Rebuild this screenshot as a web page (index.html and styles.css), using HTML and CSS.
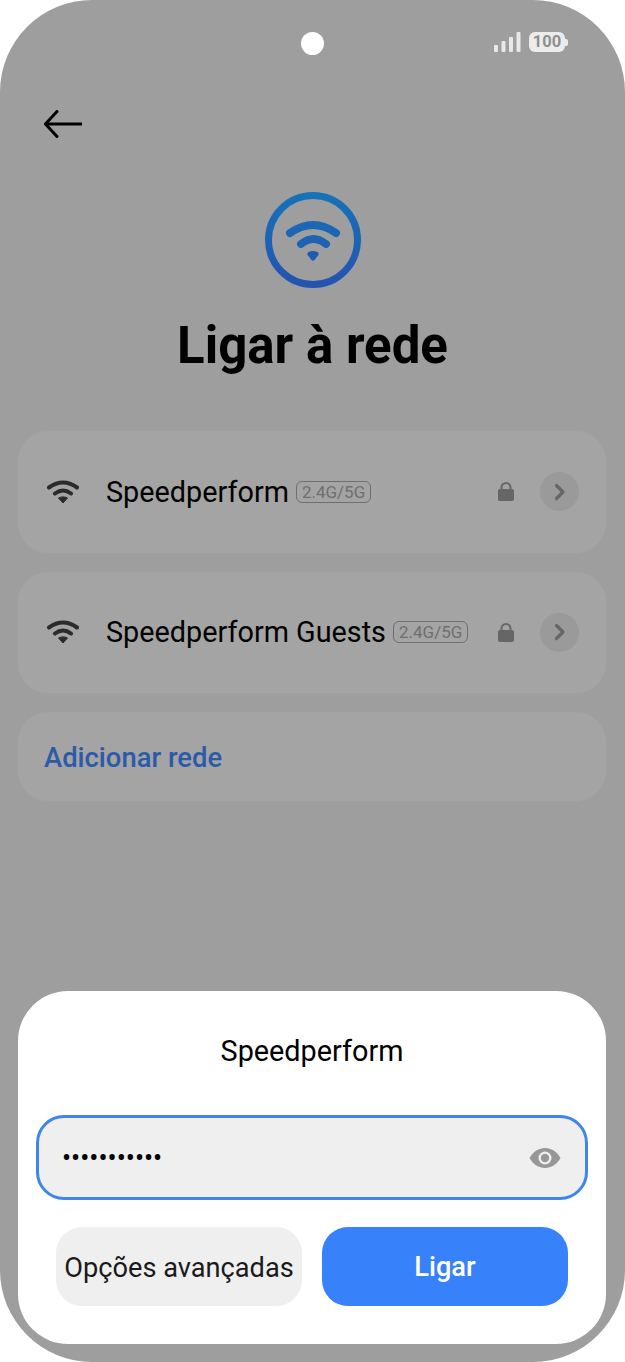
FILE: index.html
```html
<!DOCTYPE html>
<html lang="pt">
<head>
    <meta charset="UTF-8">
    <meta name="viewport" content="width=device-width, initial-scale=1.0">
    <title>Ligar à rede</title>
    <link rel="stylesheet" href="styles.css">
</head>
<body>
    <div class="phone">
        <!-- Status bar -->
        <div class="status-bar">
            <div class="camera"></div>
            <svg class="signal" width="27" height="20" viewBox="0 0 27 20">
                <rect x="0" y="13" width="4" height="7" rx="1"/>
                <rect x="7.500" y="9" width="4" height="11" rx="1"/>
                <rect x="15" y="5" width="4" height="15" rx="1"/>
                <rect x="22.500" y="0" width="4" height="20" rx="1"/>
            </svg>
            <div class="battery"><span class="battery-level">100</span><span class="battery-tip"></span></div>
        </div>

        <!-- Header -->
        <div class="top-nav">
            <svg class="back" width="38" height="28" viewBox="0 0 38 28">
                <path d="M13 1.500 1.500 14 13 26.500M1.500 14H37" fill="none" stroke="#000" stroke-width="3" stroke-linecap="round" stroke-linejoin="round"/>
            </svg>
        </div>
        <div class="header">
            <svg class="logo" width="96" height="96" viewBox="0 0 96 96">
                <defs>
                    <linearGradient id="logoGrad" gradientUnits="userSpaceOnUse" x1="0" y1="0" x2="0" y2="96">
                        <stop offset="0" stop-color="#1673b8"/>
                        <stop offset="1" stop-color="#2452b0"/>
                    </linearGradient>
                </defs>
                <circle cx="48" cy="48" r="44.500" fill="none" stroke="url(#logoGrad)" stroke-width="7"/>
                <path d="M25 41Q48 25 71 41M36 52Q48.500 42 61 52" fill="none" stroke="url(#logoGrad)" stroke-width="8" stroke-linecap="round"/>
                <path d="M43.500 60C46 58.500 50 58.500 52.500 60C54 61 54 62.500 53 63.500L49.500 68C48.500 69 47.500 69 46.500 68L43 63.500C42 62.500 42 61 43.500 60Z" fill="#2059b0"/>
            </svg>
            <h1 class="title">Ligar à rede</h1>
        </div>

        <!-- Networks -->
        <div class="network-list">
            <div class="card network">
                <svg class="wifi" width="32" height="24" viewBox="0 0 32 24">
                    <path d="M2 7.500Q16 -2.500 30 7.500M8 13.500Q16 7.500 24 13.500" fill="none" stroke="#2b2b2b" stroke-width="4" stroke-linecap="round"/>
                    <path d="M11.500 18C14 16.500 18 16.500 20.500 18L16 23Z" fill="#2b2b2b" stroke="#2b2b2b" stroke-linejoin="round"/>
                </svg>
                <span class="network-name">Speedperform</span>
                <span class="band">2.4G/5G</span>
                <svg class="lock" width="16" height="19" viewBox="0 0 16 19">
                    <path d="M3.500 8V5.500a4.500 4.500 0 0 1 9 0V8" fill="none" stroke="#666" stroke-width="2"/>
                    <rect x="0" y="7" width="16" height="12" rx="2" fill="#666"/>
                </svg>
                <div class="go">
                    <svg width="12" height="18" viewBox="0 0 12 18"><path d="M2.500 2.500 9 9l-6.500 6.500" fill="none" stroke="#666" stroke-width="3.200" stroke-linecap="round" stroke-linejoin="round"/></svg>
                </div>
            </div>
            <div class="card network">
                <svg class="wifi" width="32" height="24" viewBox="0 0 32 24">
                    <path d="M2 7.500Q16 -2.500 30 7.500M8 13.500Q16 7.500 24 13.500" fill="none" stroke="#2b2b2b" stroke-width="4" stroke-linecap="round"/>
                    <path d="M11.500 18C14 16.500 18 16.500 20.500 18L16 23Z" fill="#2b2b2b" stroke="#2b2b2b" stroke-linejoin="round"/>
                </svg>
                <span class="network-name">Speedperform Guests</span>
                <span class="band">2.4G/5G</span>
                <svg class="lock" width="16" height="19" viewBox="0 0 16 19">
                    <path d="M3.500 8V5.500a4.500 4.500 0 0 1 9 0V8" fill="none" stroke="#666" stroke-width="2"/>
                    <rect x="0" y="7" width="16" height="12" rx="2" fill="#666"/>
                </svg>
                <div class="go">
                    <svg width="12" height="18" viewBox="0 0 12 18"><path d="M2.500 2.500 9 9l-6.500 6.500" fill="none" stroke="#666" stroke-width="3.200" stroke-linecap="round" stroke-linejoin="round"/></svg>
                </div>
            </div>
            <div class="card add-network">Adicionar rede</div>
        </div>

        <!-- Password sheet -->
        <div class="sheet">
            <div class="sheet-title">Speedperform</div>
            <div class="password-field">
                <span class="password-dots">•••••••••••</span>
                <svg class="eye" width="32" height="22" viewBox="0 0 32 22">
                    <path d="M0.500 11C4 4.500 10 1 16 1s12 3.500 15.500 10C28 17.500 22 21 16 21S4 17.500 0.500 11Z" fill="#979797"/>
                    <circle cx="16" cy="11" r="6.500" fill="#efefef"/>
                    <circle cx="16" cy="11" r="4.200" fill="#979797"/>
                </svg>
            </div>
            <div class="sheet-actions">
                <div class="btn btn-secondary">Opções avançadas</div>
                <div class="btn btn-primary">Ligar</div>
            </div>
        </div>
    </div>
</body>
</html>
```

FILE: styles.css
```css
* {
    margin: 0;
    padding: 0;
    box-sizing: border-box;
}

body {
    background: #fff;
    font-family: 'Roboto', sans-serif;
    color: #000;
}

.phone {
    position: relative;
    width: 625px;
    height: 1362px;
    background: #9e9e9e;
    border-radius: 92px;
    overflow: hidden;
}

/* Status bar */
.status-bar {
    height: 86px;
    padding: 32px 57px 0 0;
    display: flex;
    justify-content: flex-end;
    align-items: flex-start;
    gap: 8px;
}

.camera {
    position: absolute;
    left: 301px;
    top: 32px;
    width: 23px;
    height: 23px;
    border-radius: 50%;
    background: #fff;
}

.signal {
    fill: #e8e8e8;
}

.battery {
    display: flex;
    align-items: center;
}

.battery-level {
    width: 36px;
    height: 20px;
    border-radius: 6px;
    background: #ececec;
    color: #8f8f8f;
    font-size: 16.5px;
    font-weight: 700;
    line-height: 20px;
    text-align: center;
}

.battery-tip {
    width: 3px;
    height: 7px;
    background: #ececec;
    border-radius: 0 2px 2px 0;
}

/* Header */
.top-nav {
    height: 106px;
    padding: 24px 0 0 44px;
}

.back {
    display: block;
}

.header {
    text-align: center;
}

.logo {
    display: block;
    margin: 0 auto;
}

.title {
    font-size: 51px;
    font-weight: 700;
    line-height: 56px;
    margin-top: 30px;
}

/* Network list */
.network-list {
    margin: 57px 19px 0 18px;
    display: flex;
    flex-direction: column;
    gap: 19px;
}

.card {
    background: #a4a4a4;
    border-radius: 30px;
}

.network {
    height: 121.5px;
    padding: 0 27px 0 29px;
    display: flex;
    align-items: center;
}

.wifi {
    flex: none;
    margin-right: 27px;
}

.network-name {
    font-size: 28.8px;
    white-space: nowrap;
    margin-right: 7px;
}

.band {
    border: 1.5px solid #6f6f6f;
    border-radius: 6px;
    color: #6f6f6f;
    font-size: 17px;
    line-height: 20px;
    padding: 0 5px;
}

.lock {
    margin-left: auto;
    margin-right: 26px;
}

.go {
    width: 39px;
    height: 39px;
    border-radius: 50%;
    background: #9a9a9a;
    display: flex;
    align-items: center;
    justify-content: center;
}

.add-network {
    height: 89px;
    padding: 2px 26px 0;
    display: flex;
    align-items: center;
    color: #2b5aa8;
    font-size: 27.4px;
    font-weight: 500;
}

/* Bottom sheet */
.sheet {
    position: absolute;
    left: 18px;
    right: 19px;
    top: 991px;
    height: 353px;
    background: #fff;
    border-radius: 50px;
    padding: 0 18px;
}

.sheet-title {
    font-size: 28.8px;
    line-height: 34px;
    text-align: center;
    margin-top: 43px;
}

.password-field {
    height: 85px;
    margin-top: 47px;
    border: 3px solid #3f86e8;
    border-radius: 28px;
    background: #efefef;
    display: flex;
    align-items: center;
    justify-content: space-between;
    padding: 0 24px 0 23px;
}

.password-dots {
    font-size: 27px;
}

.sheet-actions {
    display: flex;
    gap: 20px;
    margin: 27px 20px 0;
}

.btn {
    flex: 1;
    height: 79px;
    border-radius: 26px;
    display: flex;
    align-items: center;
    justify-content: center;
    font-size: 27.2px;
    white-space: nowrap;
}

.btn-secondary {
    background: #efefef;
    color: #1a1a1a;
    padding-top: 2px;
}

.btn-primary {
    background: #3781fb;
    color: #fff;
    font-weight: 500;
}
```
